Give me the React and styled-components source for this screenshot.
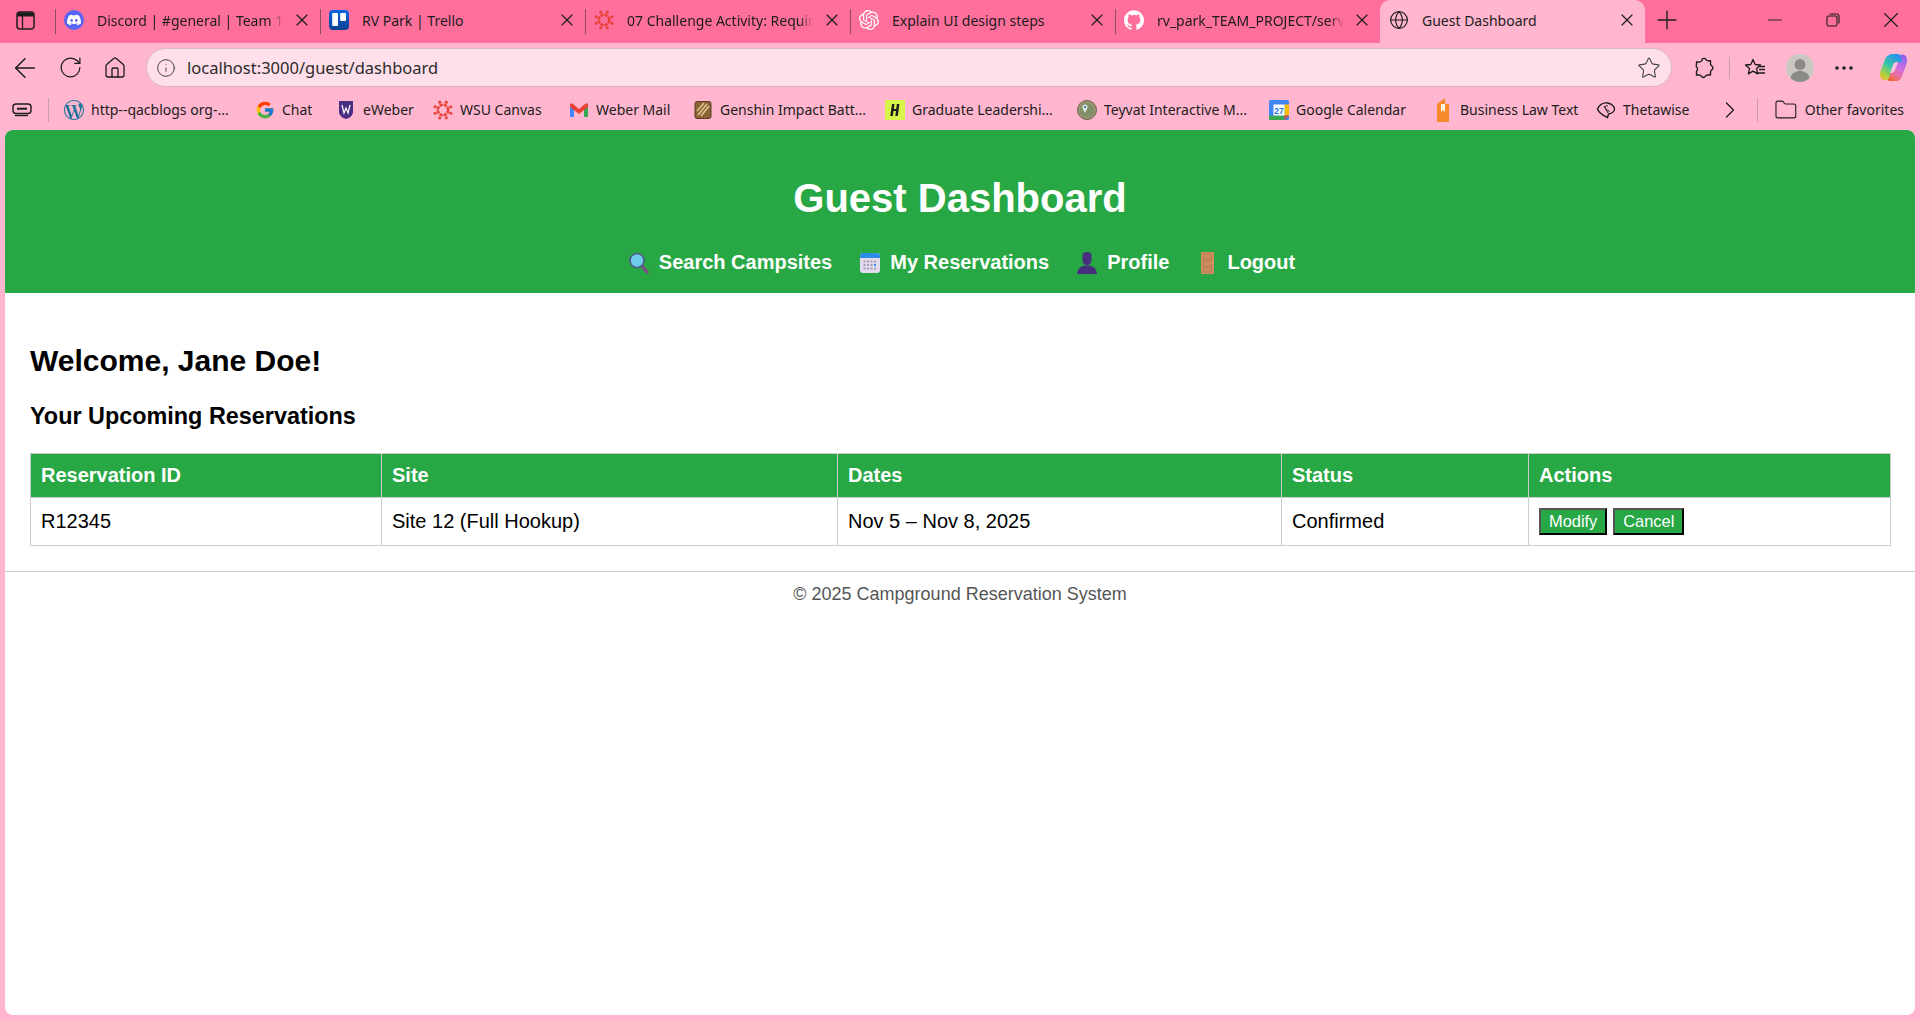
import React from 'react';
import styled, { createGlobalStyle } from 'styled-components';
import { ArrowLeft, RotateCw, Home, Info, Star, ChevronRight, Folder, Globe, Plus, X, Minus, MoreHorizontal } from 'lucide-react';
import { SiDiscord, SiGithub, SiOpenai, SiWordpress } from 'react-icons/si';
import { FcGoogle } from 'react-icons/fc';

const Global = createGlobalStyle`
  html, body { margin: 0; padding: 0; height: 100%; overflow: hidden; }
  body { font-family: "Liberation Sans", Arial, sans-serif; background: #ffb6ce; }
`;

const Window = styled.div`
  height: 1020px;
  display: flex;
  flex-direction: column;
  background: #ffb6ce;
`;

const TabStrip = styled.div`
  height: 43px;
  flex: none;
  display: flex;
  align-items: stretch;
  background: #ff6f9c;
`;

const SideToggle = styled.div`
  width: 55px;
  flex: none;
  box-sizing: border-box;
  display: flex;
  align-items: center;
  padding: 0 0 3px 16px;
`;

const Tab = styled.div`
  width: 265px;
  flex: none;
  box-sizing: border-box;
  display: flex;
  align-items: center;
  padding: ${p => (p.$active ? '0 8px 3px 9px' : '0 8px 3px 8px')};
  font: 14px "Noto Sans", "Open Sans", sans-serif;
  color: #1c1c1c;
  background: ${p => (p.$active ? '#ffb6ce' : 'transparent')};
  border-radius: ${p => (p.$active ? '10px 10px 0 0' : '0')};
  border-left: ${p => (p.$active ? 'none' : '1px solid #8e4a62')};
  margin: ${p => (p.$active ? '0' : '9px 0')};
`;

const TabIcon = styled.span`
  width: 20px;
  height: 20px;
  flex: none;
  display: flex;
  align-items: center;
  justify-content: center;
  background: ${p => p.$bg || 'transparent'};
  border-radius: 50%;
`;

const TabTitle = styled.span`
  flex: 1;
  min-width: 0;
  margin: 0 8px 0 13px;
  white-space: nowrap;
  overflow: hidden;
  mask-image: ${p => (p.$fade ? 'linear-gradient(to right, #000 92%, transparent)' : 'none')};
`;

const NewTab = styled.div`
  width: 44px;
  flex: none;
  display: flex;
  align-items: center;
  justify-content: center;
  padding-bottom: 3px;
`;

const WindowControls = styled.div`
  margin-left: auto;
  display: flex;
`;

const WindowButton = styled.div`
  width: 58px;
  display: flex;
  align-items: center;
  justify-content: center;
  padding-bottom: 3px;
`;

const Toolbar = styled.div`
  height: 46px;
  flex: none;
  display: flex;
  align-items: center;
  padding-top: 3px;
  box-sizing: border-box;
`;

const NavIcon = styled.div`
  width: ${p => p.$w || 50}px;
  margin-left: ${p => p.$ml || 0}px;
  height: 38px;
  flex: none;
  display: flex;
  align-items: center;
  justify-content: center;
  color: #1c1c1c;
`;

const AddressBar = styled.div`
  width: 1526px;
  height: 39px;
  box-sizing: border-box;
  flex: none;
  display: flex;
  align-items: center;
  padding: 0 10px 0 9px;
  margin-left: 6px;
  background: #ffe0ea;
  border: 1px solid #d9b6c2;
  border-radius: 20px;
  font: 16.500px "Noto Sans", "Open Sans", sans-serif;
  color: #2b2b2b;
`;

const Url = styled.span`
  flex: 1;
  margin-left: 11px;
`;

const ToolDivider = styled.div`
  width: 1px;
  height: 22px;
  background: #c99cac;
  flex: none;
`;

const Bookmarks = styled.div`
  height: 41px;
  flex: none;
  display: flex;
  align-items: center;
  padding-left: 12px;
  font: 14px "Noto Sans", "Open Sans", sans-serif;
  color: #1c1c1c;
`;

const BookmarkDivider = styled.div`
  width: 1px;
  height: 24px;
  background: #c99cac;
  flex: none;
  margin: ${p => p.$margin};
`;

const Bookmark = styled.div`
  display: flex;
  align-items: center;
  gap: 7px;
  white-space: nowrap;
  flex: none;
  width: ${p => p.$w}px;
`;

const BookmarkIcon = styled.span`
  min-width: 20px;
  height: 24px;
  display: flex;
  align-items: center;
  justify-content: center;
`;

const Page = styled.div`
  flex: 1;
  margin: 0 5px 5px;
  background: #fff;
  border-radius: 8px;
  overflow: hidden;
`;

const Header = styled.header`
  height: 163px;
  box-sizing: border-box;
  background: #28a745;
  color: #fff;
  text-align: center;
  padding-top: 45px;
`;

const Title = styled.h1`
  margin: 0;
  font-size: 40px;
  line-height: 46px;
  font-weight: 700;
`;

const Nav = styled.nav`
  margin-top: 30px;
  display: flex;
  justify-content: center;
  gap: 28px;
  padding-left: 4px;
`;

const NavLink = styled.a`
  display: flex;
  align-items: center;
  gap: 10px;
  color: #fff;
  font-size: 20px;
  line-height: 23px;
  font-weight: 700;
  text-decoration: none;
`;

const NavEmoji = styled.span`
  width: 20px;
  height: 22px;
  flex: none;
  display: flex;
  justify-content: center;
`;

const Main = styled.main`
  padding: 51px 25px 25px;
`;

const Welcome = styled.h2`
  margin: 0;
  font-size: 30px;
  line-height: 34px;
  font-weight: 700;
  color: #000;
`;

const SubTitle = styled.h3`
  margin: 25px 0 0;
  font-size: 23.400px;
  line-height: 27px;
  font-weight: 700;
  color: #000;
`;

const Table = styled.table`
  width: 1860px;
  margin-top: 23px;
  border-collapse: collapse;
  table-layout: fixed;
  font-size: 20px;
`;

const Th = styled.th`
  height: 44px;
  padding: 0 10px;
  box-sizing: border-box;
  border: 1px solid #ccc;
  background: #28a745;
  color: #fff;
  text-align: left;
  font-weight: 700;
`;

const Td = styled.td`
  height: 48px;
  padding: 0 10px;
  box-sizing: border-box;
  border: 1px solid #ccc;
  color: #000;
`;

const ActionButton = styled.button`
  height: 27px;
  padding: 0 8px;
  margin-right: 6px;
  font: 16.400px "Liberation Sans", Arial, sans-serif;
  color: #fff;
  background: #28a745;
  border: 2px solid;
  border-color: #555 #000 #000 #555;
  vertical-align: middle;
`;

const Footer = styled.footer`
  border-top: 1px solid #ccc;
  text-align: center;
  padding-top: 12px;
  font-size: 18px;
  line-height: 21px;
  color: #555;
`;

const Canvas = () => (
  <svg width="20" height="20" viewBox="0 0 24 24" fill="none">
    <circle cx="12" cy="12" r="6.300" stroke="#e8433a" strokeWidth="3.200" strokeDasharray="3.950 1" />
    {[22.5, 67.5, 112.5, 157.5, 202.5, 247.5, 292.5, 337.500].map(a => (
      <circle key={a} cx={12 + 10.2 * Math.cos((a * Math.PI) / 180)} cy={12 + 10.2 * Math.sin((a * Math.PI) / 180)} r="1.900" fill="#e8433a" />
    ))}
  </svg>
);

const Trello = () => (
  <svg width="20" height="20" viewBox="0 0 20 20">
    <defs>
      <linearGradient id="trelloFill" x1="0" y1="0" x2="0" y2="1">
        <stop offset="0" stopColor="#0c66e4" />
        <stop offset="1" stopColor="#09408f" />
      </linearGradient>
    </defs>
    <rect width="20" height="20" rx="4" fill="url(#trelloFill)" />
    <rect x="3.200" y="3" width="5.800" height="13" rx="1" fill="#fff" />
    <rect x="11.200" y="3" width="5.800" height="8" rx="1" fill="#fff" />
  </svg>
);

const SideIcon = () => (
  <svg width="19" height="19" viewBox="0 0 19 19" fill="none">
    <rect x="1" y="1" width="17" height="17" rx="3" stroke="#1c1c1c" strokeWidth="1.500" />
    <path d="M1.500 5.500V4A2.500 2.500 0 0 1 4 1.500h11A2.500 2.500 0 0 1 17.500 4v1.500z" fill="#1c1c1c" />
    <path d="M6.500 5v13" stroke="#1c1c1c" strokeWidth="1.300" />
  </svg>
);

const RestoreIcon = () => (
  <svg width="14" height="14" viewBox="0 0 14 14" fill="none" stroke="#1c1c1c" strokeWidth="1.100">
    <rect x="1" y="3" width="10" height="10" rx="1.500" />
    <path d="M3.500 1h7a2.500 2.500 0 0 1 2.500 2.500v7" />
  </svg>
);

const Extension = () => (
  <svg width="22" height="22" viewBox="0 0 22 22" fill="none" stroke="#1c1c1c" strokeWidth="1.400" strokeLinejoin="round">
    <path d="M9 2.500c1-1.500 3-1.500 4 0 .5.800 1.300 1.300 2.300 1.300h2.200v3c0 1 .6 1.600 1.400 2.200 1.400 1 1.400 2.800 0 3.800-.8.6-1.400 1.200-1.400 2.200v3h-3c-1 0-1.600.6-2.200 1.400-1 1.400-2.800 1.400-3.800 0-.6-.8-1.200-1.400-2.200-1.400H3.500v-3c0-1 .7-1.300 1-2.300.4-1.500-.8-2.200-1.200-3.200-.2-.6.200-1.500.200-2.500v-2h3c1 0 2-.7 2.500-1.500z" />
  </svg>
);

const WalletIcon = () => (
  <svg width="20" height="18" viewBox="0 0 20 18" fill="none" stroke="#1c1c1c" strokeWidth="1.400">
    <rect x="1" y="3" width="18" height="9.500" rx="3" />
    <path d="M5 7.700h10" strokeWidth="2" />
    <path d="M3 14.500h13" />
  </svg>
);

const FavStar = () => (
  <svg width="24" height="24" viewBox="0 0 24 24" fill="none" stroke="#1c1c1c" strokeWidth="1.300" strokeLinejoin="round">
    <path d="M10 3.500l2.200 5 5.300.5-4 3.600 1.200 5.300L10 15.100l-4.700 2.800 1.200-5.300-4-3.600 5.300-.5z" />
    <path d="M16 10.500h6M16 13.500h6M15 17h7" />
  </svg>
);

const Avatar = () => (
  <svg width="28" height="28" viewBox="0 0 28 28">
    <circle cx="14" cy="14" r="14" fill="#cbc8c2" />
    <circle cx="14" cy="10.500" r="5.500" fill="#8d8b87" />
    <path d="M4.500 24c1-5 5-7 9.500-7s8.500 2 9.500 7c-2.500 2.500-5.700 4-9.500 4s-7-1.500-9.500-4z" fill="#8d8b87" />
  </svg>
);

const Copilot = () => (
  <svg width="27" height="27" viewBox="0 0 26 26">
    <defs>
      <linearGradient id="cpLeft" x1="0.700" y1="0" x2="0.100" y2="1">
        <stop offset="0" stopColor="#2a8ff0" />
        <stop offset="0.450" stopColor="#35c6a8" />
        <stop offset="0.800" stopColor="#b4d23c" />
        <stop offset="1" stopColor="#f6b73c" />
      </linearGradient>
      <linearGradient id="cpRight" x1="0.800" y1="0" x2="0.300" y2="1">
        <stop offset="0" stopColor="#8a62f0" />
        <stop offset="0.500" stopColor="#d56ee0" />
        <stop offset="0.800" stopColor="#f0708a" />
        <stop offset="1" stopColor="#f5662e" />
      </linearGradient>
    </defs>
    <path d="M18 25.500c-1 .5-2 .5-3 .5h-5c-1.500 0-2.500-1-3-2.500L5 18h6c2 0 3-1 3.500-3L17.500 4c.6-2 2-3.500 4-3.500 3 0 4.500 2.500 4.500 6 0 1.500-.5 3-1 4.500l-4 11c-.5 1.500-1.500 3-3 3.500z" fill="url(#cpRight)" />
    <path d="M8 1.500C9 .5 10 0 12 0h5c1.500 0 2.500 1 3 2.500L21.500 8H16c-2 0-3 1-3.500 3L9 22c-.6 2-2 3.500-4 3.500-3 0-5-2.500-5-6 0-1.500.5-3 1-4.500L5 5c.5-1.500 1.500-3 3-3.500z" fill="url(#cpLeft)" />
    <path d="M12.500 11c.5-2 1.500-3 3.500-3h1.500L14.500 15c-.5 2-1.500 3-3.500 3H9.500z" fill="#f7c4dc" />
  </svg>
);

const GenshinBadge = () => (
  <svg width="18" height="20" viewBox="0 0 18 20">
    <rect x="1" y="1.500" width="16" height="17" rx="2" fill="#8a6236" stroke="#5c3f22" />
    <path d="M4 15L13 4M7 16l8-10M3 11l7-8" stroke="#e3c690" strokeWidth="1.500" />
  </svg>
);

const GraduateBadge = () => (
  <svg width="20" height="20" viewBox="0 0 20 20">
    <rect width="20" height="20" rx="1" fill="#d7f54a" />
    <path d="M7 4h2.500L8.800 9h2.400l.7-5h2.500L12.800 16h-2.500l.7-5H8.500L7.800 16H5.300z" fill="#1c1c1c" />
  </svg>
);

const TeyvatBadge = () => (
  <svg width="20" height="20" viewBox="0 0 20 20">
    <circle cx="10" cy="10" r="9.500" fill="#9a9270" stroke="#6b6650" />
    <circle cx="10" cy="10" r="6.800" fill="#7f8f68" />
    <path d="M8 13L5.800 8.500a2.600 2.600 0 1 1 4.500-.3z" fill="#e8efe2" />
    <circle cx="8" cy="7" r="1.200" fill="#3f88a8" />
  </svg>
);

const CalendarBadge = () => (
  <svg width="20" height="20" viewBox="0 0 20 20">
    <rect width="20" height="20" rx="1.500" fill="#4285f4" />
    <rect x="15.500" y="4.500" width="4.500" height="11" fill="#fbbc04" />
    <path d="M4.500 15.500H15.500V20H1.500A1.500 1.500 0 0 1 0 18.500V15.500z" fill="#34a853" />
    <path d="M15.500 15.500H20L15.500 20z" fill="#ea4335" />
    <rect x="4.500" y="4.500" width="11" height="11" fill="#fff" />
    <text x="10" y="13.500" fontSize="8.500" fontWeight="700" textAnchor="middle" fill="#1a73e8" fontFamily="Liberation Sans">27</text>
  </svg>
);

const BookBadge = () => (
  <svg width="14" height="24" viewBox="0 0 14 24">
    <path d="M1 6l8-6v6h4v18H1z" fill="#f68a2a" />
    <path d="M5 6h4v8l-2-2-2 2z" fill="#fff3e2" />
  </svg>
);

const ThetaBadge = () => (
  <svg width="20" height="18" viewBox="0 0 20 18" fill="none" stroke="#1c1c1c" strokeWidth="1.400">
    <path d="M1.500 8c2-4.500 6-6.500 10-6s7 3.500 7 6-3 4.500-6 5l-1 3.500C8 15 3 12 1.500 8z" />
    <path d="M8 5l4 7M12 5c-2-1-4 1-2 3s4 1 3 3" strokeWidth="1" />
  </svg>
);

const WeberShield = () => (
  <svg width="16" height="20" viewBox="0 0 16 20">
    <path d="M1 1h14v11c0 3-3 6-7 7-4-1-7-4-7-7z" fill="#4b2e83" />
    <path d="M4 5l2 8 2-5 2 5 2-8" stroke="#fff" strokeWidth="1.200" fill="none" />
  </svg>
);

const GmailIcon = () => (
  <svg width="18" height="14" viewBox="0 0 18 14">
    <path d="M0 1l4 3v10H1a1 1 0 0 1-1-1z" fill="#4285f4" />
    <path d="M18 1l-4 3v10h3a1 1 0 0 0 1-1z" fill="#34a853" />
    <path d="M0 1c1-1 2-1 3 0l6 5 6-5c1-1 2-1 3 0v3l-9 7-9-7z" fill="#ea4335" />
  </svg>
);

const MagnifierEmoji = () => (
  <svg width="20" height="22" viewBox="0 0 20 22">
    <path d="M13 14l5 6" stroke="#7a4f86" strokeWidth="3.500" strokeLinecap="round" />
    <circle cx="8" cy="8.500" r="7" fill="#6ecbea" stroke="#4d5a8c" strokeWidth="1.600" />
  </svg>
);

const CalendarEmoji = () => (
  <svg width="20" height="22" viewBox="0 0 20 22">
    <rect y="1" width="20" height="20" rx="3" fill="#e3dcee" />
    <path d="M0 4a3 3 0 0 1 3-3h14a3 3 0 0 1 3 3v2H0z" fill="#2d8ee8" />
    {[8.5, 12, 15.500].map(y => [3.5, 7, 10.5, 14].map(x => (
      <rect key={`${x}-${y}`} x={x} y={y} width="2" height="2" fill={x === 14 && y === 12 ? '#2d8ee8' : '#a79cb8'} />
    )))}
  </svg>
);

const PersonEmoji = () => (
  <svg width="20" height="22" viewBox="0 0 20 22">
    <path d="M5.500 3c0-2 2-3 4.500-3s4.500 1 4.500 3v5c0 3-2 5-4.500 5s-4.500-2-4.500-5z" fill="#472f7e" />
    <path d="M0 22c.5-4 2-7 7-8.500h6c5 1.500 6.500 4.500 7 8.500z" fill="#472f7e" />
  </svg>
);

const DoorEmoji = () => (
  <svg width="13" height="22" viewBox="0 0 13 22">
    <rect width="13" height="22" rx="1" fill="#cf8d60" />
    <rect x="2.500" y="2" width="8" height="5" fill="none" stroke="#ba7c52" />
    <rect x="2.500" y="9" width="8" height="5" fill="none" stroke="#ba7c52" />
    <rect x="2.500" y="16" width="8" height="4" fill="none" stroke="#ba7c52" />
    <circle cx="11.500" cy="11" r="0.800" fill="#f3b04a" />
  </svg>
);

const tabs = [
  { title: 'Discord | #general | Team 1_Case', icon: <SiDiscord size={14} color="#fff" />, bg: '#5865f2', fade: true },
  { title: 'RV Park | Trello', icon: <Trello /> },
  { title: '07 Challenge Activity: Requirements', icon: <Canvas />, fade: true },
  { title: 'Explain UI design steps', icon: <SiOpenai size={20} color="#fff" /> },
  { title: 'rv_park_TEAM_PROJECT/server', icon: <SiGithub size={20} color="#fff" />, fade: true },
];

const bookmarks = [
  { label: 'http--qacblogs org-...', w: 191, icon: <SiWordpress size={20} color="#21759b" /> },
  { label: 'Chat', w: 81, icon: <FcGoogle size={20} /> },
  { label: 'eWeber', w: 97, icon: <WeberShield /> },
  { label: 'WSU Canvas', w: 136, icon: <Canvas /> },
  { label: 'Weber Mail', w: 124, icon: <GmailIcon /> },
  { label: 'Genshin Impact Batt...', w: 192, icon: <GenshinBadge /> },
  { label: 'Graduate Leadershi...', w: 192, icon: <GraduateBadge /> },
  { label: 'Teyvat Interactive M...', w: 192, icon: <TeyvatBadge /> },
  { label: 'Google Calendar', w: 164, icon: <CalendarBadge /> },
  { label: 'Business Law Text', w: 163, icon: <BookBadge /> },
  { label: 'Thetawise', w: 120, icon: <ThetaBadge /> },
];

const navLinks = [
  { label: 'Search Campsites', icon: <MagnifierEmoji /> },
  { label: 'My Reservations', icon: <CalendarEmoji /> },
  { label: 'Profile', icon: <PersonEmoji /> },
  { label: 'Logout', icon: <DoorEmoji /> },
];

const columns = [351, 456, 444, 247, 362];
const headings = ['Reservation ID', 'Site', 'Dates', 'Status', 'Actions'];

const App = () => (
  <Window>
    <Global />
    <TabStrip>
      <SideToggle><SideIcon /></SideToggle>
      {tabs.map(t => (
        <Tab key={t.title}>
          <TabIcon $bg={t.bg}>{t.icon}</TabIcon>
          <TabTitle $fade={t.fade}>{t.title}</TabTitle>
          <X size={20} strokeWidth={1.4} color="#1c1c1c" />
        </Tab>
      ))}
      <Tab $active>
        <TabIcon><Globe size={24} strokeWidth={1.4} color="#1c1c1c" /></TabIcon>
        <TabTitle>Guest Dashboard</TabTitle>
        <X size={20} strokeWidth={1.4} color="#1c1c1c" />
      </Tab>
      <NewTab><Plus size={30} strokeWidth={1.100} color="#1c1c1c" /></NewTab>
      <WindowControls>
        <WindowButton><Minus size={22} strokeWidth={1} color="#1c1c1c" /></WindowButton>
        <WindowButton><RestoreIcon /></WindowButton>
        <WindowButton><X size={26} strokeWidth={1} color="#1c1c1c" /></WindowButton>
      </WindowControls>
    </TabStrip>
    <Toolbar>
      <NavIcon><ArrowLeft size={32} strokeWidth={1.100} /></NavIcon>
      <NavIcon $w={40}><RotateCw size={25} strokeWidth={1.200} /></NavIcon>
      <NavIcon><Home size={24} strokeWidth={1.300} /></NavIcon>
      <AddressBar>
        <Info size={20} strokeWidth={1.200} color="#444" />
        <Url>localhost:3000/guest/dashboard</Url>
        <Star size={24} strokeWidth={1.100} color="#444" />
      </AddressBar>
      <NavIcon $ml={7}><Extension /></NavIcon>
      <ToolDivider />
      <NavIcon><FavStar /></NavIcon>
      <NavIcon $w={40}><Avatar /></NavIcon>
      <NavIcon $w={48}><MoreHorizontal size={24} strokeWidth={1.600} /></NavIcon>
      <NavIcon><Copilot /></NavIcon>
    </Toolbar>
    <Bookmarks>
      <WalletIcon />
      <BookmarkDivider $margin="0 15px 0 16px" />
      {bookmarks.map(b => (
        <Bookmark key={b.label} $w={b.w}><BookmarkIcon>{b.icon}</BookmarkIcon>{b.label}</Bookmark>
      ))}
      <ChevronRight size={28} strokeWidth={1.100} />
      <BookmarkDivider $margin="0 16px 0 13px" />
      <Bookmark $w={130}><BookmarkIcon><Folder size={24} strokeWidth={1.100} /></BookmarkIcon>Other favorites</Bookmark>
    </Bookmarks>
    <Page>
      <Header>
        <Title>Guest Dashboard</Title>
        <Nav>
          {navLinks.map(l => (
            <NavLink key={l.label} href="#"><NavEmoji>{l.icon}</NavEmoji>{l.label}</NavLink>
          ))}
        </Nav>
      </Header>
      <Main>
        <Welcome>Welcome, Jane Doe!</Welcome>
        <SubTitle>Your Upcoming Reservations</SubTitle>
        <Table>
          <colgroup>
            {columns.map((w, i) => <col key={i} style={{ width: w }} />)}
          </colgroup>
          <thead>
            <tr>{headings.map(h => <Th key={h}>{h}</Th>)}</tr>
          </thead>
          <tbody>
            <tr>
              <Td>R12345</Td>
              <Td>Site 12 (Full Hookup)</Td>
              <Td>Nov 5 – Nov 8, 2025</Td>
              <Td>Confirmed</Td>
              <Td>
                <ActionButton>Modify</ActionButton>
                <ActionButton>Cancel</ActionButton>
              </Td>
            </tr>
          </tbody>
        </Table>
      </Main>
      <Footer>© 2025 Campground Reservation System</Footer>
    </Page>
  </Window>
);

export default App;
